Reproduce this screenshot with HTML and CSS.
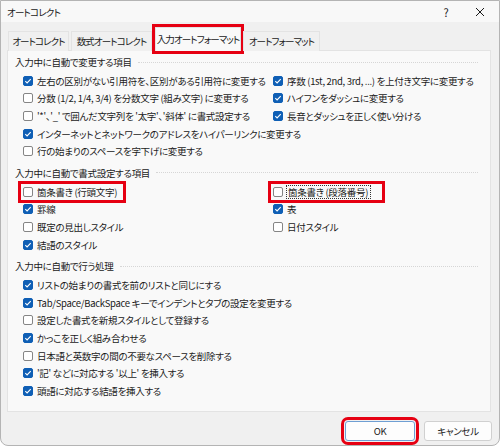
FILE: index.html
```html
<!DOCTYPE html>
<html lang="ja">
<head>
    <meta charset="UTF-8">
    <title>オートコレクト</title>
    <link rel="stylesheet" href="styles.css">
</head>
<body>

<div class="dialog">
    <div class="titlebar">
        <span class="title">オートコレクト</span>
        <span class="ctrl">?</span>
        <span class="ctrl close">
            <svg width="10" height="10" viewBox="0 0 10 10"><path d="M1 1L9 9M9 1L1 9" stroke="#1a1a1a" stroke-width="1"/></svg>
        </span>
    </div>

    <div class="tabs">
        <div class="tab tab-1">オートコレクト</div>
        <div class="tab tab-2">数式オートコレクト</div>
        <div class="tab tab-3 active">入力オートフォーマット</div>
        <div class="tab tab-4">オートフォーマット</div>
    </div>

    <div class="panel">
        <div class="section">
            <div class="heading"><span>入力中に自動で変更する項目</span></div>
            <div class="cols">
                <div class="col">
                    <label class="row"><span class="box on"></span>左右の区別がない引用符を、区別がある引用符に変更する</label>
                    <label class="row"><span class="box"></span>分数 (1/2, 1/4, 3/4) を分数文字 (組み文字) に変更する</label>
                    <label class="row"><span class="box"></span>'*'、'_' で囲んだ文字列を '太字'、'斜体' に書式設定する</label>
                    <label class="row"><span class="box on"></span>インターネットとネットワークのアドレスをハイパーリンクに変更する</label>
                    <label class="row"><span class="box"></span>行の始まりのスペースを字下げに変更する</label>
                </div>
                <div class="col">
                    <label class="row"><span class="box on"></span>序数 (1st, 2nd, 3rd, ...) を上付き文字に変更する</label>
                    <label class="row"><span class="box on"></span>ハイフンをダッシュに変更する</label>
                    <label class="row"><span class="box on"></span>長音とダッシュを正しく使い分ける</label>
                </div>
            </div>
        </div>

        <div class="section">
            <div class="heading"><span>入力中に自動で書式設定する項目</span></div>
            <div class="cols">
                <div class="col">
                    <div><label class="row mark"><span class="box"></span>箇条書き (行頭文字)</label></div>
                    <label class="row"><span class="box on"></span>罫線</label>
                    <label class="row"><span class="box"></span>既定の見出しスタイル</label>
                    <label class="row"><span class="box on"></span>結語のスタイル</label>
                </div>
                <div class="col">
                    <div><label class="row mark"><span class="box"></span><span class="focus">箇条書き (段落番号)</span></label></div>
                    <label class="row"><span class="box on"></span>表</label>
                    <label class="row"><span class="box"></span>日付スタイル</label>
                </div>
            </div>
        </div>

        <div class="section">
            <div class="heading"><span>入力中に自動で行う処理</span></div>
            <div class="col">
                <label class="row"><span class="box on"></span>リストの始まりの書式を前のリストと同じにする</label>
                <label class="row"><span class="box on"></span>Tab/Space/BackSpace キーでインデントとタブの設定を変更する</label>
                <label class="row"><span class="box"></span>設定した書式を新規スタイルとして登録する</label>
                <label class="row"><span class="box on"></span>かっこを正しく組み合わせる</label>
                <label class="row"><span class="box"></span>日本語と英数字の間の不要なスペースを削除する</label>
                <label class="row"><span class="box on"></span>'記' などに対応する '以上' を挿入する</label>
                <label class="row"><span class="box on"></span>頭語に対応する結語を挿入する</label>
            </div>
        </div>
    </div>

    <div class="footer">
        <button class="btn ok">OK</button>
        <button class="btn">キャンセル</button>
    </div>
</div>

</body>
</html>
```

FILE: styles.css
```css
* {
    box-sizing: border-box;
}
body {
    margin: 0;
    background-color: #ffffff;
    font-family: "Noto Sans CJK JP", "Noto Sans", sans-serif;
    font-size: 9.5px;
    letter-spacing: -0.3px;
    font-feature-settings: "palt";
    color: #1a1a1a;
}
.dialog {
    width: 500px;
    height: 446px;
    background-color: #f0f0f0;
    border: 1px solid #b4b4b4;
    border-radius: 0 0 8px 8px;
    overflow: hidden;
}

/* title bar */
.titlebar {
    height: 21px;
    display: flex;
    align-items: center;
    background-color: #f8f8f8;
    padding-left: 6px;
}
.title {
    flex: 1;
    letter-spacing: -0.8px;
}
.ctrl {
    width: 34px;
    text-align: center;
    font-size: 11px;
}
.close {
    display: flex;
    justify-content: center;
    margin-right: 2px;
}

/* tabs */
.tabs {
    height: 29px;
    display: flex;
    align-items: flex-end;
    gap: 2px;
    padding-left: 7px;
    position: relative;
    z-index: 1;
}
.tab {
    height: 20px;
    line-height: 19px;
    text-align: center;
    white-space: nowrap;
    letter-spacing: -0.9px;
    background-color: #f0f0f0;
    border: 1px solid #e3e3e3;
    border-bottom: none;
}
.tab-1 { width: 61px; }
.tab-2 { width: 81px; }
.tab-3 { width: 86px; margin-left: 1px; }
.tab-4 { width: 77px; }
.tab.active {
    height: 24px;
    line-height: 22px;
    background-color: #f9f9f9;
    outline: 3px solid #e60012;
}

/* tab page */
.panel {
    height: 362px;
    margin: -1px 8px 0 6px;
    padding: 3px 7px 0;
    background-color: #f9f9f9;
    border: 1px solid #e3e3e3;
}
.section {
    margin-bottom: 5px;
}
.heading {
    height: 16px;
    display: flex;
    align-items: center;
    gap: 6px;
    margin-bottom: 2px;
    padding-right: 5px;
}
.heading::after {
    content: "";
    flex: 1;
    border-top: 1px dotted #d6d6d6;
}
.cols {
    display: flex;
}
.cols .col:first-child {
    width: 258px;
}
.col {
    padding-left: 8px;
}
.cols .col + .col {
    padding-left: 0;
}
.row {
    height: 17.6px;
    display: flex;
    align-items: center;
    white-space: nowrap;
}
.row.mark {
    display: inline-flex;
    position: relative;
}
.row.mark::after {
    content: "";
    position: absolute;
    left: -5px;
    right: -9px;
    top: -2px;
    bottom: -2px;
    border: 3px solid #e60012;
}
.focus {
    border: 1px dotted #333;
    padding: 0 2px 0 1px;
    margin: 0 5px 0 -1px;
    line-height: 12px;
}

/* checkboxes */
.box {
    width: 10px;
    height: 10px;
    flex: none;
    margin-right: 4px;
    border: 1px solid #858585;
    border-radius: 2px;
    background-color: #ffffff;
}
.box.on {
    border-color: #0f5fb5;
    background-color: #0f5fb5;
    background-image: url("data:image/svg+xml,%3Csvg xmlns='http://www.w3.org/2000/svg' width='8' height='8' viewBox='0 0 8 8'%3E%3Cpath d='M1.3 4.2L3.1 5.9L6.7 2.1' fill='none' stroke='white' stroke-width='1.1'/%3E%3C/svg%3E");
    background-repeat: no-repeat;
    background-position: center;
}

/* buttons */
.footer {
    display: flex;
    justify-content: flex-end;
    gap: 9px;
    padding: 9px 7px 0 0;
}
.btn {
    height: 20px;
    width: 68px;
    font-family: inherit;
    font-size: 9.5px;
    letter-spacing: -0.3px;
    font-feature-settings: "palt";
    color: #1a1a1a;
    background-color: #fdfdfd;
    border: 1px solid #d0d0d0;
    border-radius: 3px;
}
.btn.ok {
    width: 70px;
    border-color: #6f9fd3;
    outline: 3px solid #e60012;
    outline-offset: 1px;
}
```
